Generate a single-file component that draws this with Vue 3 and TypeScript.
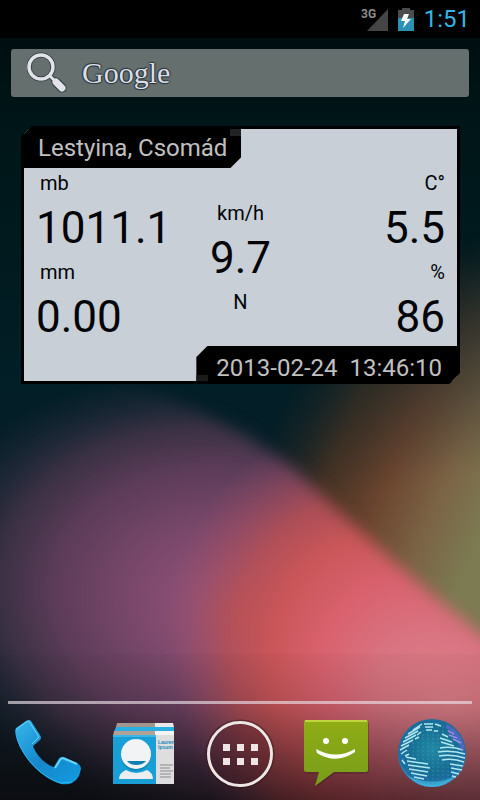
<script setup lang="ts">
interface Reading {
  label: string
  value: string
}

const pressure: Reading = { label: 'mb', value: '1011.1' }
const rain: Reading = { label: 'mm', value: '0.00' }
const temperature: Reading = { label: 'C°', value: '5.5' }
const humidity: Reading = { label: '%', value: '86' }
const wind = { unit: 'km/h', value: '9.7', direction: 'N' }

const left: Reading[] = [pressure, rain]
const right: Reading[] = [temperature, humidity]
</script>

<template>
  <div class="screen">
    <svg class="wallpaper" viewBox="0 0 480 800" preserveAspectRatio="none" aria-hidden="true">
      <defs>
        <linearGradient id="sky" x1="0" y1="0" x2="0" y2="1">
          <stop offset="0" stop-color="#00090d" />
          <stop offset=".12" stop-color="#001416" />
          <stop offset=".3" stop-color="#001a1e" />
          <stop offset=".48" stop-color="#021e26" />
          <stop offset=".8" stop-color="#14202c" />
          <stop offset="1" stop-color="#0a1a20" />
        </linearGradient>
        <linearGradient id="amber" gradientUnits="userSpaceOnUse" x1="280" y1="400" x2="500" y2="490">
          <stop offset="0" stop-color="#2e2a20" stop-opacity="0" />
          <stop offset=".3" stop-color="#563823" stop-opacity=".8" />
          <stop offset=".55" stop-color="#6c4630" />
          <stop offset=".78" stop-color="#7b6446" />
          <stop offset="1" stop-color="#7c7b52" />
        </linearGradient>
        <linearGradient id="amberFade" gradientUnits="userSpaceOnUse" x1="430" y1="250" x2="470" y2="470">
          <stop offset="0" stop-color="#fff" stop-opacity="0" />
          <stop offset=".35" stop-color="#fff" stop-opacity=".45" />
          <stop offset="1" stop-color="#fff" />
        </linearGradient>
        <radialGradient id="violet" gradientUnits="userSpaceOnUse" cx="0" cy="0" r="1" gradientTransform="translate(250 615) rotate(15) scale(335 240)">
          <stop offset="0" stop-color="#a6556c" />
          <stop offset=".17" stop-color="#8f5176" />
          <stop offset=".38" stop-color="#774769" />
          <stop offset=".6" stop-color="#5b3c58" />
          <stop offset=".76" stop-color="#403347" stop-opacity=".9" />
          <stop offset="1" stop-color="#1c2a3a" stop-opacity="0" />
        </radialGradient>
        <radialGradient id="rose" gradientUnits="userSpaceOnUse" cx="0" cy="0" r="1" gradientTransform="translate(450 710) rotate(46) scale(320 245)">
          <stop offset="0" stop-color="#df8189" />
          <stop offset=".25" stop-color="#d97582" />
          <stop offset=".45" stop-color="#d9626f" />
          <stop offset=".63" stop-color="#ca5659" />
          <stop offset=".77" stop-color="#bb5053" stop-opacity=".8" />
          <stop offset="1" stop-color="#9c4c65" stop-opacity="0" />
        </radialGradient>
        <linearGradient id="shade" x1="0" y1="0" x2="0" y2="1">
          <stop offset="0" stop-color="#0c0508" stop-opacity=".03" />
          <stop offset=".35" stop-color="#0c0508" stop-opacity=".13" />
          <stop offset="1" stop-color="#0c0508" stop-opacity=".62" />
        </linearGradient>
        <filter id="soft" x="-20%" y="-20%" width="140%" height="140%">
          <feGaussianBlur stdDeviation="8" />
        </filter>
        <mask id="lobe" maskUnits="userSpaceOnUse" x="0" y="300" width="480" height="500">
          <path d="M-60 340C60 350 190 390 292 466C350 522 420 590 530 670V860H-60Z" fill="#fff" filter="url(#soft)" />
        </mask>
        <mask id="amberMask" maskUnits="userSpaceOnUse" x="180" y="200" width="300" height="600">
          <path d="M200 220H540V790L260 480Z" fill="url(#amberFade)" filter="url(#soft)" />
        </mask>
      </defs>
      <rect width="480" height="800" fill="url(#sky)" />
      <g mask="url(#amberMask)">
        <rect x="180" y="200" width="300" height="600" fill="url(#amber)" />
      </g>
      <g mask="url(#lobe)">
        <rect y="300" width="480" height="500" fill="url(#violet)" />
        <rect y="300" width="480" height="500" fill="url(#rose)" />
      </g>
      <rect y="654" width="480" height="146" fill="url(#shade)" />
    </svg>

    <header class="status">
      <svg class="signal" viewBox="0 0 28 26" role="img" aria-label="Signal strength">
        <path d="M27 3V25H6Z" fill="#454545" />
        <text x="0" y="12">3G</text>
      </svg>
      <svg class="battery" viewBox="0 0 16 24" role="img" aria-label="Battery charging">
        <path d="M4 1H12V3H16V11H0V3H4Z" fill="#494d4f" />
        <path d="M0 11H16V24H0Z" fill="#2b91b5" />
        <path d="M6 7H11L9 12H13L5 21L7 14H3Z" fill="#f5fbff" />
      </svg>
      <time class="clock">1:51</time>
    </header>

    <main class="home">
      <button class="search" type="button" aria-label="Google search">
        <svg class="lens" viewBox="0 0 42 42" aria-hidden="true">
          <g fill="none" stroke="#2c3941">
            <circle cx="14" cy="15" r="12" stroke-width="5" />
            <path d="M23 24L27 28" stroke-width="5" />
            <path d="M29 30L35 36" stroke-width="9" stroke-linecap="round" />
          </g>
          <g fill="none" stroke="#e2e3e8">
            <circle cx="14" cy="15" r="12" stroke-width="3.5" />
            <path d="M23 24L29 30" stroke-width="3" />
            <path d="M29 30L35 36" stroke-width="7" stroke-linecap="round" />
          </g>
        </svg>
        <span class="brand">Google</span>
      </button>

      <section class="weather">
        <div class="panel">
          <h1 class="place">Lestyina, Csomád</h1>
          <div class="readings">
            <dl class="column">
              <template v-for="r in left" :key="r.label">
                <dt>{{ r.label }}</dt>
                <dd>{{ r.value }}</dd>
              </template>
            </dl>
            <dl class="column wind">
              <dt>{{ wind.unit }}</dt>
              <dd>{{ wind.value }}</dd>
              <dt>{{ wind.direction }}</dt>
            </dl>
            <dl class="column end">
              <template v-for="r in right" :key="r.label">
                <dt>{{ r.label }}</dt>
                <dd>{{ r.value }}</dd>
              </template>
            </dl>
          </div>
          <time class="stamp">2013-02-24&nbsp; 13:46:10</time>
        </div>
      </section>
    </main>

    <hr class="divider" />
    <nav class="dock" aria-label="Favourites">
      <button type="button" aria-label="Phone">
        <svg viewBox="0 0 72 72">
          <defs>
            <linearGradient id="phone" x1="0" y1="0" x2="1" y2="1">
              <stop offset="0" stop-color="#36b9ed" />
              <stop offset=".5" stop-color="#1687cb" />
              <stop offset="1" stop-color="#139bdf" />
            </linearGradient>
          </defs>
          <path d="M4 10L14 3Q17 1 19 3L28 17Q30 20 28 22L21 28C24 37 34 47 42 49L46 42Q48 38 52 39L65 45Q69 47 69 51L67 58Q65 62 60 65Q56 67 49 66C30 60 12 42 5 22Q2 13 4 10Z" fill="url(#phone)" />
          <path d="M4 12L14 4Q17 2 18 5L27 19L20 26" fill="none" stroke="#63d2f4" stroke-width="1" />
          <path d="M43 50L48 42Q50 39 53 41L65 46" fill="none" stroke="#65d5fa" stroke-width="2" />
          <path d="M5 20C12 42 31 60 49 65L60 64" fill="none" stroke="#2ab6f5" stroke-width="1" />
        </svg>
      </button>
      <button type="button" aria-label="People">
        <svg viewBox="0 0 72 72">
          <path d="M9 5H47V9H8Z" fill="#a3968e" />
          <path d="M47 5H65L66 9H47Z" fill="#e8e8e8" />
          <path d="M8 9H66V14H6Z" fill="#29aee0" />
          <path d="M6 13H47V18H5Z" fill="#b3a198" />
          <path d="M47 13H66V18H47Z" fill="#f3f3f3" />
          <path d="M48 17H66V66H48Z" fill="#dededf" />
          <path d="M5 17H48V66H5Z" fill="#18a0d6" />
          <path d="M5 18H48" stroke="#5dcdf0" />
          <circle cx="28" cy="38" r="15" fill="#0b6f9b" opacity=".5" />
          <circle cx="28" cy="36" r="15" fill="#f2f3f4" />
          <path d="M19 43H38Q35 47 28 47Q22 47 19 43Z" fill="#127faf" />
          <path d="M11 61Q11 55 18 52Q28 58 39 52Q45 55 45 61Z" fill="#ebedef" />
          <text class="tiny" x="50" y="26">Lauren</text>
          <text class="tiny" x="50" y="31">Ipsum</text>
          <path d="M52 47H65M52 50H62M52 53H65M52 56H63M52 59H63" stroke="#88898b" stroke-width="1" />
        </svg>
      </button>
      <button type="button" aria-label="All apps">
        <svg viewBox="0 0 72 72">
          <circle cx="36" cy="36" r="32" fill="#471820" fill-opacity=".25" stroke="#311319" stroke-opacity=".45" stroke-width="5" />
          <circle cx="36" cy="36" r="31.5" fill="none" stroke="#eee5e5" stroke-width="3" />
          <path d="M19 26h7v7h-7zM33 26h7v7h-7zM47 26h7v7h-7zM19 40h7v7h-7zM33 40h7v7h-7zM47 40h7v7h-7z" fill="#eee5e5" />
        </svg>
      </button>
      <button type="button" aria-label="Messaging">
        <svg viewBox="0 0 72 72">
          <defs>
            <linearGradient id="bubble" x1="0" y1="0" x2="0" y2="1">
              <stop offset="0" stop-color="#91ad16" />
              <stop offset="1" stop-color="#769d19" />
            </linearGradient>
          </defs>
          <path d="M6 3H66Q69 3 69 6V53Q69 56 66 56H35L16 70L20 56H6Q4 56 4 53V6Q4 3 6 3Z" fill="#411d2a" opacity=".35" />
          <path d="M6 2H66Q68 2 68 4V52Q68 54 66 54H34L15 68L19 54H6Q4 54 4 52V4Q4 2 6 2Z" fill="url(#bubble)" />
          <path d="M5 3H67" stroke="#c2d53e" stroke-width="2" />
          <circle cx="26" cy="23" r="3" fill="#fff" />
          <circle cx="45" cy="23" r="3" fill="#fff" />
          <path d="M16 31Q36 42 55 31L55 34Q36 47 17 35Z" fill="#fff" />
        </svg>
      </button>
      <button type="button" aria-label="Browser">
        <svg viewBox="0 0 72 72">
          <defs>
            <radialGradient id="globe" cx=".5" cy=".45" r=".55">
              <stop offset="0" stop-color="#2189a5" />
              <stop offset=".65" stop-color="#176b91" />
              <stop offset=".9" stop-color="#1c6da5" />
              <stop offset="1" stop-color="#3aa6d6" />
            </radialGradient>
            <pattern id="dots" width="5" height="4" patternUnits="userSpaceOnUse">
              <path d="M1 1H3" stroke="#4fb3c9" stroke-width="1" opacity=".35" />
            </pattern>
          </defs>
          <circle cx="36" cy="35" r="34" fill="url(#globe)" />
          <circle cx="36" cy="35" r="31" fill="url(#dots)" />
          <path d="M12 58Q36 69 60 58Q49 69 36 69Q23 69 12 58Z" fill="#4ac0e6" opacity=".6" />
          <g fill="none" stroke="#b0e8f2" stroke-width="1.5">
            <path d="M17 12L26 6M12 16L24 9M9 20L22 13M7 24L20 17M5 28L17 22M4 32L13 27M5 36L11 32M9 38L13 36M21 17L25 14M19 21L23 19" />
            <path d="M28 6H37M29 9H37M30 12H36M39 6L45 8M38 13H42" />
            <path d="M10 39L20 41M11 43L32 46M12 47L34 50M13 51L32 54M15 55L31 58M18 59L28 61M6 42L9 46" />
            <path d="M46 16L52 19M44 20L56 24M45 24L58 28" />
            <path d="M44 30Q56 28 67 32M42 34Q56 32 69 36M43 38Q56 36 69 40M46 42Q57 40 68 44M54 46L67 48M55 50L66 52M55 54L63 56M56 58L60 59" />
          </g>
          <path d="M50 8Q64 15 67 32" fill="none" stroke="#8064db" stroke-width="4" opacity=".5" />
          <path d="M52 13L58 16M53 17L61 20M57 21L65 25" stroke="#a587f0" stroke-width="1.5" />
        </svg>
      </button>
    </nav>
  </div>
</template>

<style>
body {
  margin: 0;
  background: #000;
}
</style>

<style scoped>
.screen {
  position: relative;
  display: flex;
  flex-direction: column;
  min-height: 100vh;
  font-family: Roboto, 'Liberation Sans', sans-serif;
  isolation: isolate;
}
.wallpaper {
  position: absolute;
  inset: 0;
  width: 100%;
  height: 100%;
  z-index: -1;
}
.status {
  display: flex;
  justify-content: flex-end;
  align-items: center;
  height: 38px;
  padding-right: 10px;
  box-sizing: border-box;
  background: #000;
}
.signal {
  width: 28px;
  height: 26px;
  margin-right: 9px;
}
.signal text {
  font-size: 12px;
  font-weight: 700;
  fill: #8d8d8d;
}
.battery {
  width: 16px;
  height: 24px;
  margin-right: 10px;
}
.clock {
  font-size: 24px;
  line-height: 38px;
  color: #33b5e5;
}
.home {
  flex: 1;
  padding: 11px;
}
.search {
  display: flex;
  align-items: center;
  gap: 13px;
  width: 100%;
  height: 48px;
  padding: 0 16px;
  border: 0;
  border-radius: 3px;
  background: #656f6d;
}
.lens {
  width: 42px;
  height: 42px;
}
.brand {
  font-family: 'Liberation Serif', serif;
  font-size: 30px;
  line-height: 44px;
  color: #dcdee5;
  text-shadow: 1px 0 1px #26323c, -1px 0 1px #26323c, 0 1px 1px #26323c, 0 -1px 1px #26323c;
}
.weather {
  margin: 29px 9px 0 10px;
  padding: 3px;
  background: #000;
  clip-path: polygon(11px 0, 100% 0, 100% calc(100% - 11px), calc(100% - 11px) 100%, 0 100%, 0 11px);
}
.panel {
  display: flex;
  flex-direction: column;
  background: #c8cfd7;
}
.place,
.stamp {
  margin: 0;
  font-size: 24px;
  font-weight: 400;
  color: #c0c0c0;
}
.place {
  align-self: flex-start;
  padding: 0 14px;
  line-height: 39px;
  background: linear-gradient(#202224, #202224) top right / 11px 7px no-repeat #000;
  clip-path: polygon(0 0, 100% 0, 100% calc(100% - 11px), calc(100% - 11px) 100%, 0 100%);
}
.stamp {
  align-self: flex-end;
  padding: 4px 15px 0 20px;
  line-height: 36px;
  margin-bottom: -5px;
  background: linear-gradient(#1a1a1b, #1a1a1b) 0 29px / 12px 6px no-repeat #000;
  clip-path: polygon(11px 0, 100% 0, 100% 100%, 0 100%, 0 11px);
}
.readings {
  display: grid;
  grid-template-columns: 1fr auto 1fr;
  height: 178px;
  padding: 0 12px;
  color: #020406;
}
.column {
  margin: -2px 0 0;
}
.column dt {
  padding: 0 4px;
  font-size: 20px;
  line-height: 35px;
}
.column dd {
  margin: 0;
  font-size: 44px;
  line-height: 54px;
}
.wind {
  padding-top: 30px;
  text-align: center;
}
.end {
  text-align: right;
}
.end dt {
  padding: 0;
}
.divider {
  width: calc(100% - 16px);
  height: 3px;
  margin: 0 auto;
  border: 0;
  background: rgb(235 225 232 / 65%);
}
.dock {
  display: flex;
  justify-content: space-around;
  padding: 14px 0 10px;
}
.dock button {
  display: flex;
  padding: 0;
  border: 0;
  background: none;
}
.dock svg {
  width: 72px;
  height: 72px;
}
.tiny {
  font-size: 5px;
  font-weight: 700;
  fill: #2188bb;
}
</style>
